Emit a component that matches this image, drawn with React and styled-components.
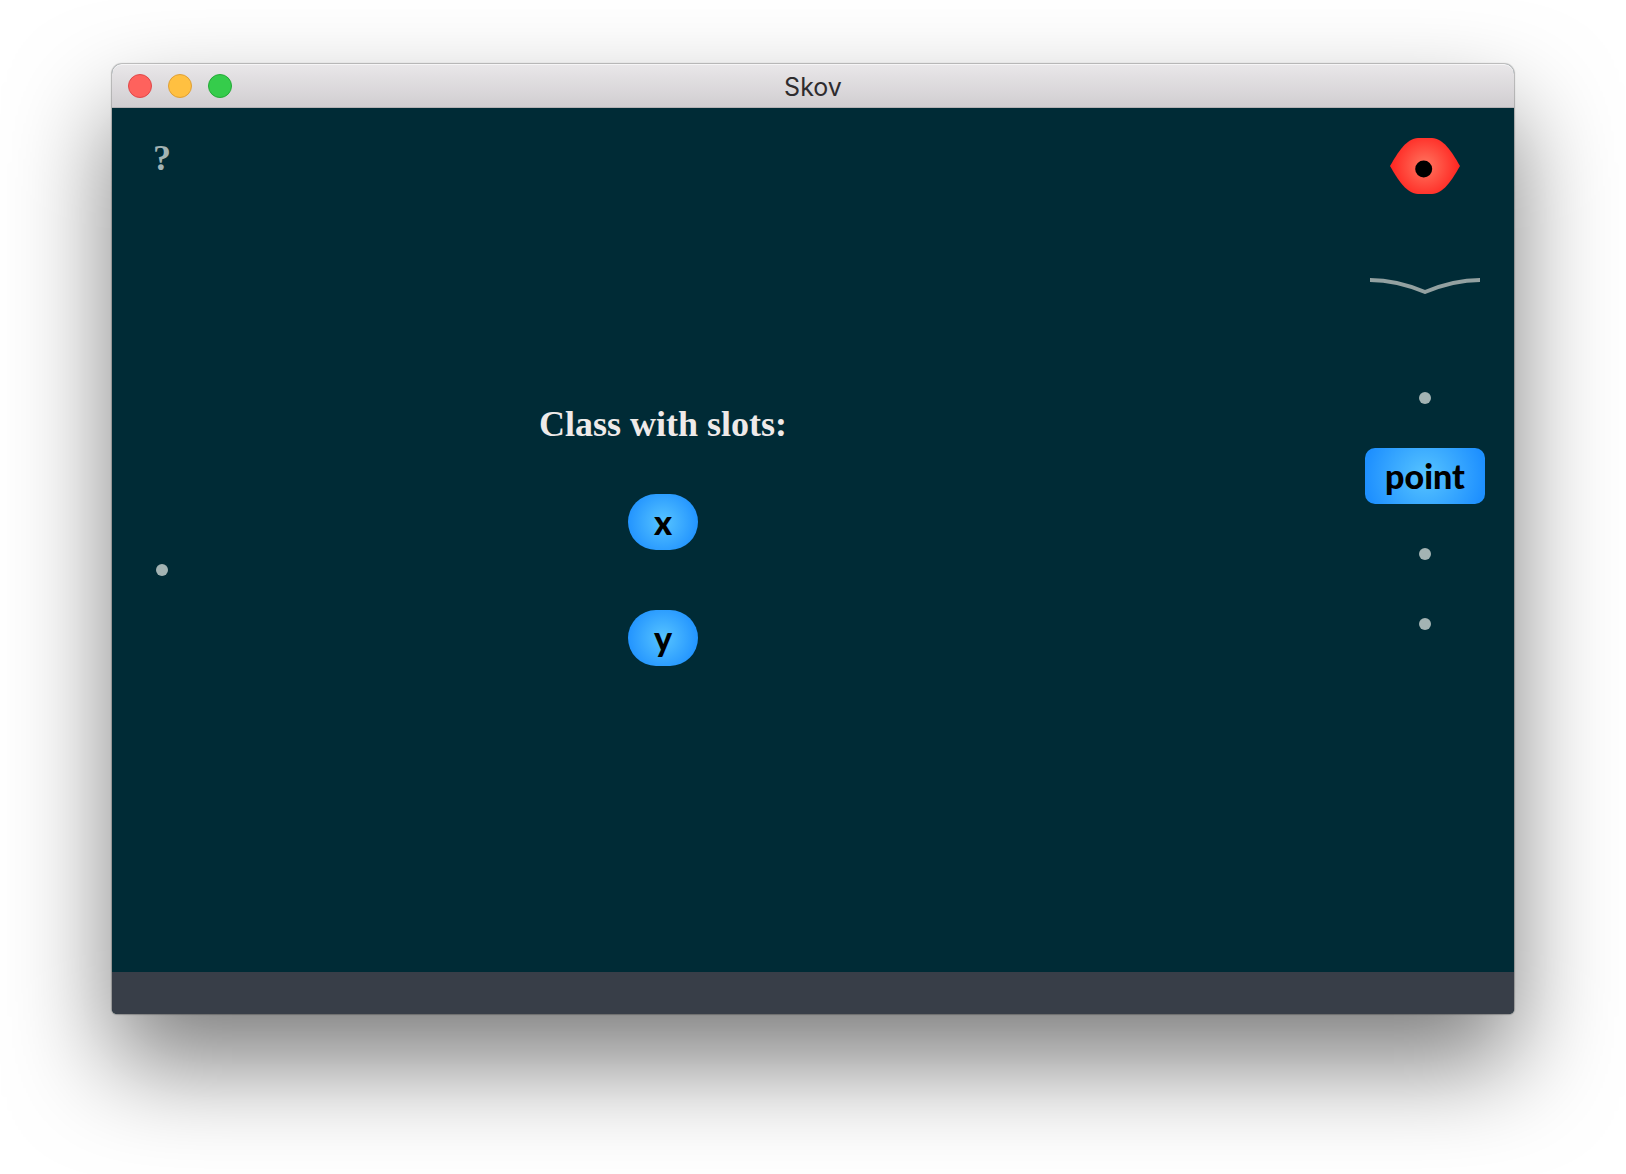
import React from "react";
import styled, { createGlobalStyle } from "styled-components";

const GlobalStyle = createGlobalStyle`
  *, *::before, *::after { box-sizing: border-box; }
  body {
    margin: 0;
    background: #fff;
    font-family: Lato, "Open Sans", sans-serif;
  }
  button {
    margin: 0;
    padding: 0;
    border: 0;
    background: none;
    font: inherit;
    cursor: pointer;
  }
`;

const serif = `"Linux Libertine", "Liberation Serif", serif`;

const Desktop = styled.div`
  display: flex;
  min-height: 100vh;
  padding: 64px 112px 160px;
  overflow: hidden;
`;

const Window = styled.section`
  flex: 1;
  display: flex;
  flex-direction: column;
  border-radius: 10px 10px 5px 5px;
  background: #002b36;
  box-shadow:
    0 0 1px 1px rgba(0, 0, 0, 0.25),
    0 50px 100px rgba(0, 0, 0, 0.51);
`;

const TitleBar = styled.header`
  display: grid;
  grid-template-columns: 1fr auto 1fr;
  align-items: center;
  height: 44px;
  padding: 0 16px;
  border-bottom: 1px solid #b5b2b5;
  border-radius: 10px 10px 0 0;
  background: linear-gradient(#e9e7e9, #d1ced1);
  box-shadow: inset 0 1px 0 #f6f5f6;
`;

const Lights = styled.div`
  display: flex;
  gap: 16px;
`;

const Light = styled.button`
  width: 24px;
  height: 24px;
  border: 1px solid ${(p) => p.$edge};
  border-radius: 50%;
  background: ${(p) => p.$fill};
`;

const Title = styled.h1`
  margin: 0;
  padding-top: 2px;
  color: #2e2c2e;
  font: 400 25px/40px Inter, Roboto, sans-serif;
`;

const Workspace = styled.main`
  flex: 1;
  display: grid;
  grid-template-columns: 100px 1fr 400px;
`;

const LeftRail = styled.nav`
  display: grid;
  grid-template-rows: auto 1fr;
  place-items: center;
  padding: 30px 0 10px;
`;

const HelpButton = styled.button`
  width: 40px;
  color: #a3b3b3;
  font-family: ${serif};
  font-size: 36px;
  font-weight: 700;
  line-height: 40px;
`;

const Dot = styled.button`
  width: 12px;
  height: 12px;
  border-radius: 50%;
  background: #a3b3b3;
`;

const Definition = styled.section`
  display: flex;
  flex-direction: column;
  align-items: center;
  justify-content: center;
  padding-bottom: 10px;
`;

const Heading = styled.h2`
  margin: 0 0 50px;
  color: #eeeae9;
  font-family: ${serif};
  font-size: 36px;
  font-weight: 700;
  line-height: 40px;
  white-space: nowrap;
`;

const SlotList = styled.div`
  display: flex;
  flex-direction: column;
  gap: 60px;
`;

const Node = styled.button`
  width: ${(p) => (p.$kind === "word" ? 120 : 70)}px;
  height: 56px;
  border-radius: ${(p) => (p.$kind === "word" ? 10 : 28)}px;
  background: radial-gradient(
    circle ${(p) => (p.$kind === "word" ? 60 : 38)}px,
    #57c4ff,
    #1e90ff
  );
  color: #000;
  font-size: 34px;
  font-weight: 900;
  line-height: 54px;
`;

const Palette = styled.aside`
  display: flex;
  flex-direction: column;
  align-items: center;
  width: 178px;
  margin-left: auto;
  padding-top: 30px;
`;

const IconButton = styled.button`
  display: block;
  svg { display: block; }
`;

const Library = styled(IconButton)`
  margin: 84px 0 98px;
`;

const Vocabulary = styled.div`
  display: flex;
  flex-direction: column;
  align-items: center;
  gap: 44px;
`;

const Following = styled.div`
  display: flex;
  flex-direction: column;
  gap: 58px;
`;

const StatusBar = styled.footer`
  height: 42px;
  border-radius: 0 0 5px 5px;
  background: #383e48;
`;

function Eye() {
  return (
    <svg width="70" height="56" viewBox="0 0 70 56" aria-hidden="true">
      <defs>
        <radialGradient id="iris" gradientUnits="userSpaceOnUse" cx="35" cy="28" r="36">
          <stop offset="0" stopColor="#ff7660" />
          <stop offset="1" stopColor="#ff221e" />
        </radialGradient>
      </defs>
      <path
        d="M0 28C8 14 17 0 28 0H42C53 0 62 14 70 28C62 42 53 56 42 56H28C17 56 8 42 0 28Z"
        fill="url(#iris)"
      />
      <circle cx="33.7" cy="31" r="8.5" fill="#000" />
    </svg>
  );
}

function Book() {
  return (
    <svg width="110" height="16" viewBox="0 0 110 16" aria-hidden="true">
      <path
        d="M0 2C20 2 37 6.5 55 14C73 6.5 90 2 110 2"
        fill="none"
        stroke="#93a1a1"
        strokeWidth="4"
      />
    </svg>
  );
}

const lights = [
  { label: "Close", fill: "#fe625d", edge: "#e0484a" },
  { label: "Minimize", fill: "#ffc041", edge: "#dfa036" },
  { label: "Zoom", fill: "#35cc4b", edge: "#24aa37" },
];

const slots = ["x", "y"];

export default function App() {
  return (
    <>
      <GlobalStyle />
      <Desktop>
        <Window>
          <TitleBar>
            <Lights>
              {lights.map((l) => (
                <Light key={l.label} aria-label={l.label} $fill={l.fill} $edge={l.edge} />
              ))}
            </Lights>
            <Title>Skov</Title>
          </TitleBar>
          <Workspace>
            <LeftRail>
              <HelpButton>?</HelpButton>
              <Dot aria-label="Add input" />
            </LeftRail>
            <Definition>
              <Heading>Class with slots:</Heading>
              <SlotList>
                {slots.map((s) => (
                  <Node key={s} $kind="slot">{s}</Node>
                ))}
              </SlotList>
            </Definition>
            <Palette>
              <IconButton aria-label="Show result"><Eye /></IconButton>
              <Library aria-label="Library"><Book /></Library>
              <Vocabulary>
                <Dot aria-label="Add before point" />
                <Node $kind="word">point</Node>
                <Following>
                  <Dot aria-label="Add word" />
                  <Dot aria-label="Add vocabulary" />
                </Following>
              </Vocabulary>
            </Palette>
          </Workspace>
          <StatusBar />
        </Window>
      </Desktop>
    </>
  );
}
